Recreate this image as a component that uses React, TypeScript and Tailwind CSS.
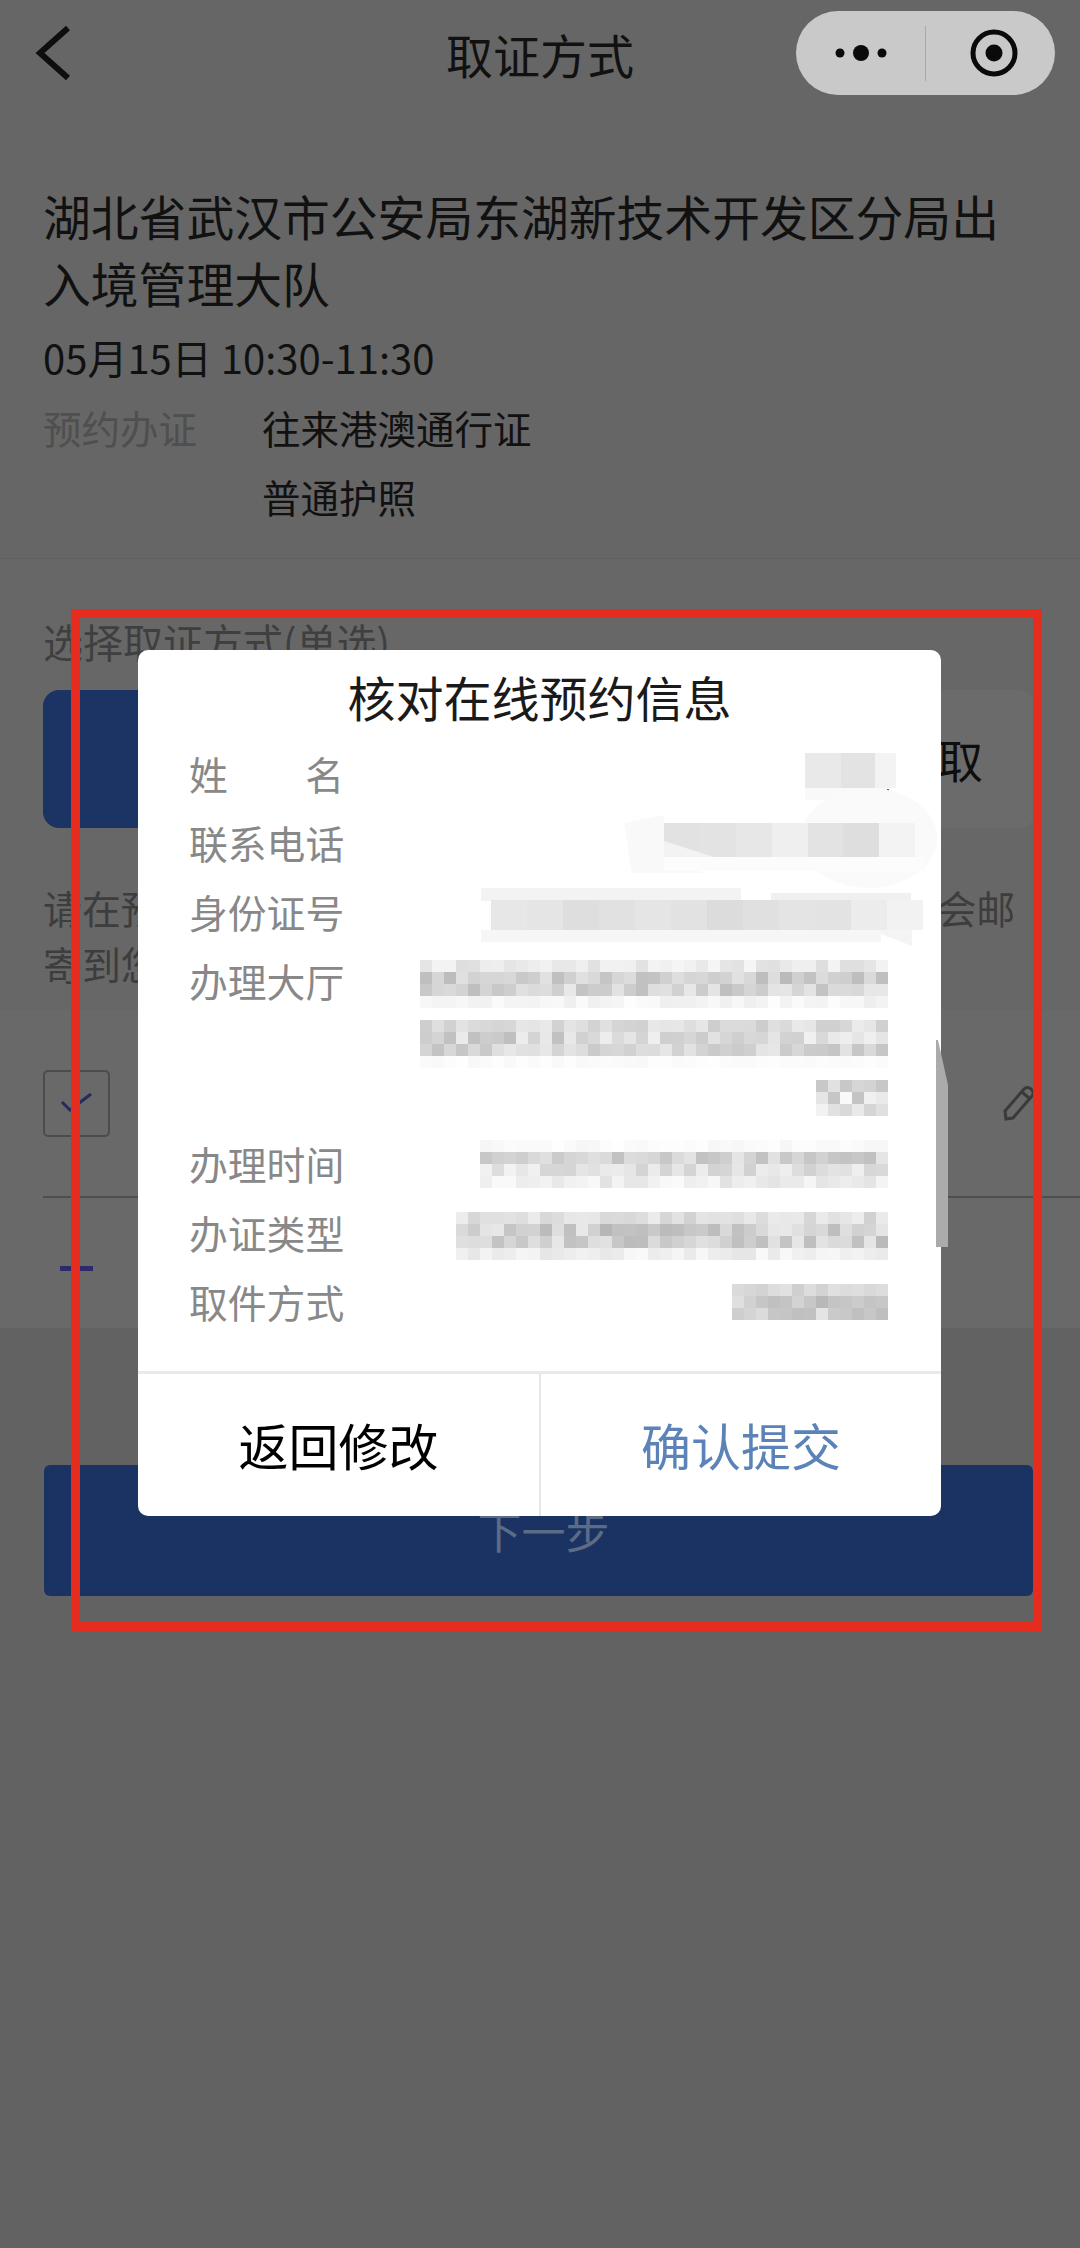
import { ReactNode } from "react";

type Band = [number, number];

// small seeded generator so the pixelated blocks stay the same on each render
function shades(seed: number, count: number) {
  let s = seed;
  const out: number[] = [];
  for (let i = 0; i < count; i++) {
    s = (s * 16807) % 2147483647;
    out.push((s % 1000) / 1000);
  }
  return out;
}

function Mosaic({ cols, bands, seed, cell = 12, className = "" }: { cols: number; bands: Band[]; seed: number; cell?: number; className?: string }) {
  const vals = shades(seed, cols * bands.length);
  return (
    <svg width={cols * cell} height={bands.length * cell} shapeRendering="crispEdges" className={"block shrink-0 " + className}>
      {bands.map(([lo, hi], r) =>
        Array.from({ length: cols }).map((_, c) => {
          const v = Math.round(lo + (hi - lo) * vals[r * cols + c]);
          return <rect key={`${r}-${c}`} x={c * cell} y={r * cell} width={cell} height={cell} fill={`rgb(${v},${v},${v})`} />;
        })
      )}
    </svg>
  );
}

function NameBlur() {
  return (
    <svg width="91" height="50" shapeRendering="crispEdges" className="block shrink-0 -mr-2 mt-[11px] overflow-visible">
      <rect x="0" y="0" width="36" height="35" fill="#e9e9e9" />
      <rect x="36" y="0" width="34" height="35" fill="#e3e3e3" />
      <rect x="70" y="0" width="21" height="35" fill="#f3f3f3" />
      <rect x="0" y="35" width="80" height="12" fill="#f9f9f9" />
      <circle cx="83" cy="37" r="1.5" fill="#666666" />
    </svg>
  );
}

function PhoneBlur() {
  const fills = ["#e2e2e2", "#e3e3e3", "#e7e7e7", "#efefef", "#e3e3e3", "#dedede"];
  return (
    <svg width="211" height="34" className="block shrink-0 mt-[12px] mr-[13px] overflow-visible">
      <ellipse cx="205" cy="15" rx="68" ry="50" fill="#fafafa" />
      <polygon points="-40,0 0,-8 0,30 40,50 -32,50" fill="#f9f9f9" />
      <rect x="211" y="0" width="40" height="34" fill="#f3f3f3" />
      {fills.map((f, i) => (
        <rect key={i} x={i * 36 - (i > 4 ? 1 : 0)} y="0" width="36" height="34" fill={f} />
      ))}
      <polygon points="0,18 50,34 0,34" fill="#f3f3f3" />
      <rect x="0" y="34" width="260" height="14" fill="#fcfcfc" />
    </svg>
  );
}

function IdBlur() {
  const fills = ["#e7e7e7", "#e5e5e5", "#dedede", "#e1e1e1", "#e5e5e5", "#e2e2e2", "#dcdcdc", "#e0e0e0", "#e4e4e4", "#e3e3e3", "#ececec", "#f2f2f2"];
  return (
    <svg width="421" height="50" className="block shrink-0 mt-[8px] -mr-[24px] overflow-visible">
      <rect x="-10" y="0" width="260" height="13" fill="#f3f3f3" />
      <rect x="280" y="5" width="140" height="8" fill="#f0f0f0" />
      {fills.map((f, i) => (
        <rect key={i} x={i * 36} y="12" width="36" height="30" fill={f} />
      ))}
      <polygon points="300,42 380,42 421,58 421,42" fill="#f4f4f4" />
      <rect x="-10" y="42" width="400" height="12" fill="#f6f6f6" />
    </svg>
  );
}

function Row({ label, children, h = "h-[69px]" }: { label: ReactNode; children?: ReactNode; h?: string }) {
  return (
    <div className={"flex justify-between pl-[51px] pr-[53px] " + h}>
      <div className="w-[155px] h-[69px] shrink-0 -mt-[3px] text-[38.8px] leading-[69px] text-[#888888] whitespace-nowrap">{label}</div>
      <div className="flex flex-col items-end">{children}</div>
    </div>
  );
}

function Dialog() {
  return (
    <div className="absolute left-[138px] top-[650px] w-[803px] h-[866px] rounded-[10px] bg-white flex flex-col">
      <div className="h-[92px] pt-[14px] text-center text-[48px] leading-[64px] text-[#1a1a1a]">核对在线预约信息</div>
      <Row
        label={
          <span className="flex justify-between">
            <span>姓</span>
            <span>名</span>
          </span>
        }
      >
        <NameBlur />
      </Row>
      <Row label="联系电话">
        <PhoneBlur />
      </Row>
      <Row label="身份证号">
        <IdBlur />
      </Row>
      <Row label="办理大厅" h="h-[183px]">
        <Mosaic className="mt-[11px]" cols={39} seed={71} bands={[[222, 246], [186, 228], [190, 232], [238, 253]]} />
        <Mosaic className="mt-[12px]" cols={39} seed={233} bands={[[205, 235], [190, 240], [192, 232], [248, 254]]} />
        <Mosaic className="mt-[12px]" cols={6} seed={419} bands={[[195, 235], [190, 250], [205, 242]]} />
      </Row>
      <Row label="办理时间">
        <Mosaic className="mt-[8px]" cols={34} seed={523} bands={[[246, 254], [192, 230], [208, 242], [226, 252]]} />
      </Row>
      <Row label="办证类型">
        <Mosaic className="mt-[11px]" cols={36} seed={617} bands={[[208, 238], [182, 232], [186, 232], [228, 250]]} />
      </Row>
      <Row label="取件方式">
        <Mosaic className="mt-[14px]" cols={13} seed={811} bands={[[205, 232], [182, 225], [190, 230]]} />
      </Row>
      <div className="flex-1" />
      <div className="flex h-[145px] border-t-[3px] border-[#e9e9e9]">
        <div className="w-[403px] pb-[2px] border-r-2 border-[#e6e6e6] flex items-center justify-center text-[50px] text-black">返回修改</div>
        <div className="flex-1 pb-[2px] flex items-center justify-center text-[50px] text-[#5b83b8]">确认提交</div>
      </div>
    </div>
  );
}

export default function App() {
  return (
    <div className="relative w-[1080px] h-[2248px] overflow-hidden bg-[#626262] font-['Noto_Sans_CJK_SC',sans-serif] text-[#111111]">
      <div className="bg-[#666666] h-[559px] border-b border-[#5e5e5e]">
        {/* nav bar */}
        <div className="grid grid-cols-[1fr_auto_1fr] items-center h-[114px]">
          <svg width="40" height="56" viewBox="0 0 40 56" className="ml-[34px] -mt-[8px]">
            <path d="M34 3 L6 28 L34 53" fill="none" stroke="#0e0e0e" strokeWidth="6" />
          </svg>
          <div className="-mt-[6px] text-[47px] leading-[60px] text-[#111111]">取证方式</div>
          <div className="justify-self-end mr-[25px] -mt-[8px] w-[259px] h-[84px] rounded-full bg-[#c9c9c9] flex items-center">
            <div className="w-[129px] flex justify-center">
              <svg width="52" height="18" viewBox="0 0 52 18">
                <circle cx="5" cy="9" r="4.5" fill="#0a0a0a" />
                <circle cx="26" cy="9" r="8" fill="#0a0a0a" />
                <circle cx="47" cy="9" r="4.5" fill="#0a0a0a" />
              </svg>
            </div>
            <div className="w-px h-[55px] bg-[#a8a8a8]" />
            <div className="flex-1 flex justify-center pl-[6px]">
              <svg width="48" height="48" viewBox="0 0 48 48">
                <circle cx="24" cy="24" r="21" fill="none" stroke="#0a0a0a" strokeWidth="5" />
                <circle cx="24" cy="24" r="8.5" fill="#0a0a0a" />
              </svg>
            </div>
          </div>
        </div>

        {/* office info */}
        <div className="pl-[43px] pt-[68px]">
          <div className="w-[970px] text-[47.8px] leading-[67px]">湖北省武汉市公安局东湖新技术开发区分局出入境管理大队</div>
          <div className="mt-[5px] text-[40px] leading-[72px] whitespace-nowrap">05月15日 10:30-11:30</div>
          <div className="flex text-[38.5px] leading-[69px]">
            <div className="w-[219px] text-[#4f4f4f]">预约办证</div>
            <div>
              <div>往来港澳通行证</div>
              <div>普通护照</div>
            </div>
          </div>
        </div>
      </div>

      <div className="bg-[#676767]">
        <div className="pl-[43px] pt-[56px] text-[40px] leading-[52px] text-[#3f3f3f]">选择取证方式(单选)</div>
        <div className="flex gap-[16px] mt-[23px] ml-[43px] w-[992px] h-[138px]">
          <div className="w-[488px] rounded-[16px] bg-[#1c3464]" />
          <div className="flex-1 rounded-[16px] bg-[#6b6b6b] flex items-center justify-end pr-[52px] pb-[2px] text-[46px] text-[#0e0e0e]">自取</div>
        </div>
        <div className="mt-[51px] pl-[43px] text-[38.9px] leading-[56px] text-[#3d3d3d] whitespace-nowrap">
          <div>请在预约时间内前往办理大厅办证，证件办理好后将会邮</div>
          <div>寄到您填写的地址</div>
        </div>

        <div className="mt-[19px] h-[318px] bg-[#696969] pl-[43px]">
          <div className="h-[188px] flex items-center justify-between border-b-2 border-[#4e4e4e]">
            <div className="w-[67px] h-[67px] rounded-[5px] border-2 border-[#4c4c4c] flex items-center justify-center">
              <svg width="36" height="24" viewBox="0 0 36 24">
                <path d="M3 11 L11 19 L32 3" fill="none" stroke="#272a5e" strokeWidth="3" />
              </svg>
            </div>
            <svg width="34" height="36" viewBox="0 0 34 36" className="mr-[44px]">
              <path d="M3 26 L22 4 Q25 1 29 4 Q33 8 30 11 L11 33 L4 34 Z M20 7 L28 14" fill="none" stroke="#3a3a3a" strokeWidth="3" />
            </svg>
          </div>
          <div className="h-[130px] flex items-center pt-[10px]">
            <div className="ml-[17px] w-[33px] h-[5px] bg-[#2b2b6c]" />
          </div>
        </div>
      </div>

      <div className="mt-[137px] ml-[44px] w-[989px] h-[131px] rounded-[6px] bg-[#1b3362] flex items-center justify-center pl-[10px] pb-[1px] text-[44px] text-[#5d6c86]">
        下一步
      </div>

      {/* modal on top of the dimmed page */}
      <Dialog />

      <svg width="12" height="207" viewBox="0 0 12 207" className="absolute left-[936px] top-[1040px]">
        <polygon points="0,0 0,207 12,207 12,45 2,0" fill="#ababab" />
      </svg>

      {/* red annotation frame */}
      <div className="absolute left-[71px] top-[609px] w-[971px] h-[1022px] border-[9px] border-[#e62c1e]" />
    </div>
  );
}
